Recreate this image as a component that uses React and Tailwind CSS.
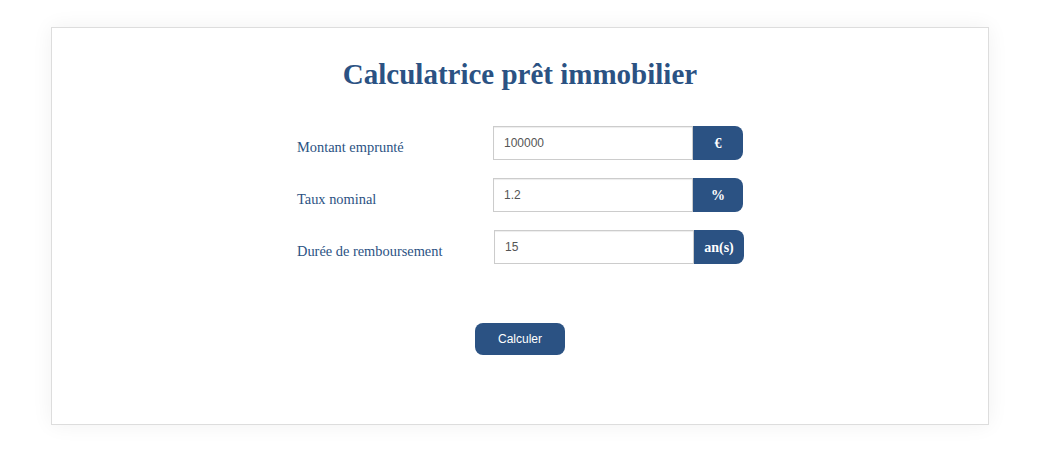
export default function App() {
  const rows = [
    { label: "Montant emprunté", value: "100000", unit: "€", shift: "" },
    { label: "Taux nominal", value: "1.2", unit: "%", shift: "" },
    { label: "Durée de remboursement", value: "15", unit: "an(s)", shift: "ml-px" },
  ];

  return (
    <div className="min-h-[463px] bg-white pt-[27px]">
      <div className="ml-[51px] w-[938px] h-[398px] border border-[#dddddd] bg-white shadow-[0_0_20px_rgba(0,0,0,0.06)]">
        <h1 className="mt-[28px] text-center text-[29px] font-bold text-[#2b5283] font-['Liberation_Serif',serif] leading-[36px]">
          Calculatrice prêt immobilier
        </h1>

        <div className="mt-[34px] ml-[245px] flex flex-col gap-[18px]">
          {rows.map((r) => (
            <div key={r.label} className="flex items-center">
              <label className="w-[196px] pt-[10px] text-[14.4px] text-[#2b5283] font-['Liberation_Serif',serif]">
                {r.label}
              </label>
              <div className={"flex h-[34px] " + r.shift}>
                <input
                  readOnly
                  value={r.value}
                  className="w-[200px] h-[34px] border border-[#cccccc] px-[10px] text-[12px] text-[#555555] font-['Liberation_Sans',sans-serif] shadow-[inset_0_1px_1px_rgba(0,0,0,0.075)] outline-none"
                />
                <span className="w-[50px] h-[34px] flex items-center justify-center rounded-r-[8px] bg-[#2b5283] text-white text-[14px] font-bold font-['Liberation_Serif',serif]">
                  {r.unit}
                </span>
              </div>
            </div>
          ))}
        </div>

        <div className="mt-[59px] flex justify-center">
          <button className="w-[90px] h-[32px] rounded-[8px] bg-[#2b5283] text-white text-[12px] font-['Liberation_Sans',sans-serif]">
            Calculer
          </button>
        </div>
      </div>
    </div>
  );
}
